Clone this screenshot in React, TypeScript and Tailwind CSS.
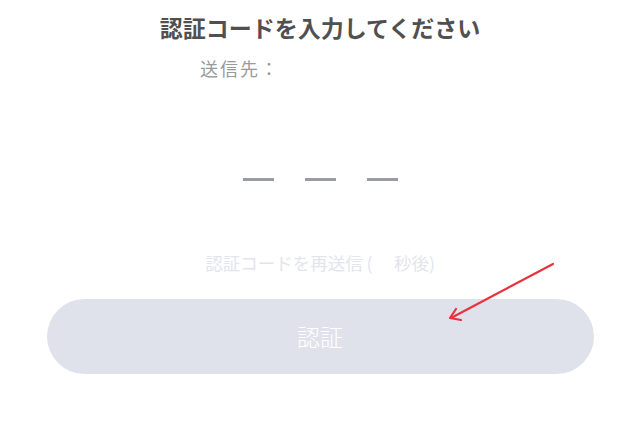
export default function App() {
  return (
    <div
      className="relative w-[640px] h-[440px] bg-white overflow-hidden"
      style={{ fontFamily: '"Noto Sans CJK JP", "Noto Sans", sans-serif' }}
    >
      <div className="flex flex-col items-center pt-[9px]">
        <h1 className="text-[23px] leading-[36px] font-semibold text-[#505050]">認証コードを入力してください</h1>
        <div className="w-full flex pl-[200px] mt-[10px]">
          <p className="text-[18px] leading-[26px] tracking-[2px] text-[#9a9a9a]">送信先：</p>
        </div>
        <div className="flex gap-[31px] mt-[97px] ml-[1px]">
          <div className="w-[31px] h-[3px] bg-[#9a9ca3]" />
          <div className="w-[31px] h-[3px] bg-[#9a9ca3]" />
          <div className="w-[31px] h-[3px] bg-[#9a9ca3]" />
        </div>
        <p className="mt-[70px] text-[17.5px] leading-[24px] text-[#e3e5ec]">認証コードを再送信 (　 秒後)</p>
        <button className="mt-[24px] w-[547px] h-[75px] rounded-full bg-[#dfe2ea] text-white text-[23px] font-light">
          認証
        </button>
      </div>
      <svg className="absolute left-0 top-0" width="640" height="440">
        <line x1="553" y1="264" x2="451" y2="318" stroke="#e8323d" strokeWidth="2.2" strokeLinecap="round" />
        <polyline points="456,309 450,318 461,320" fill="none" stroke="#e8323d" strokeWidth="2.2" strokeLinecap="round" strokeLinejoin="round" />
      </svg>
    </div>
  )
}
